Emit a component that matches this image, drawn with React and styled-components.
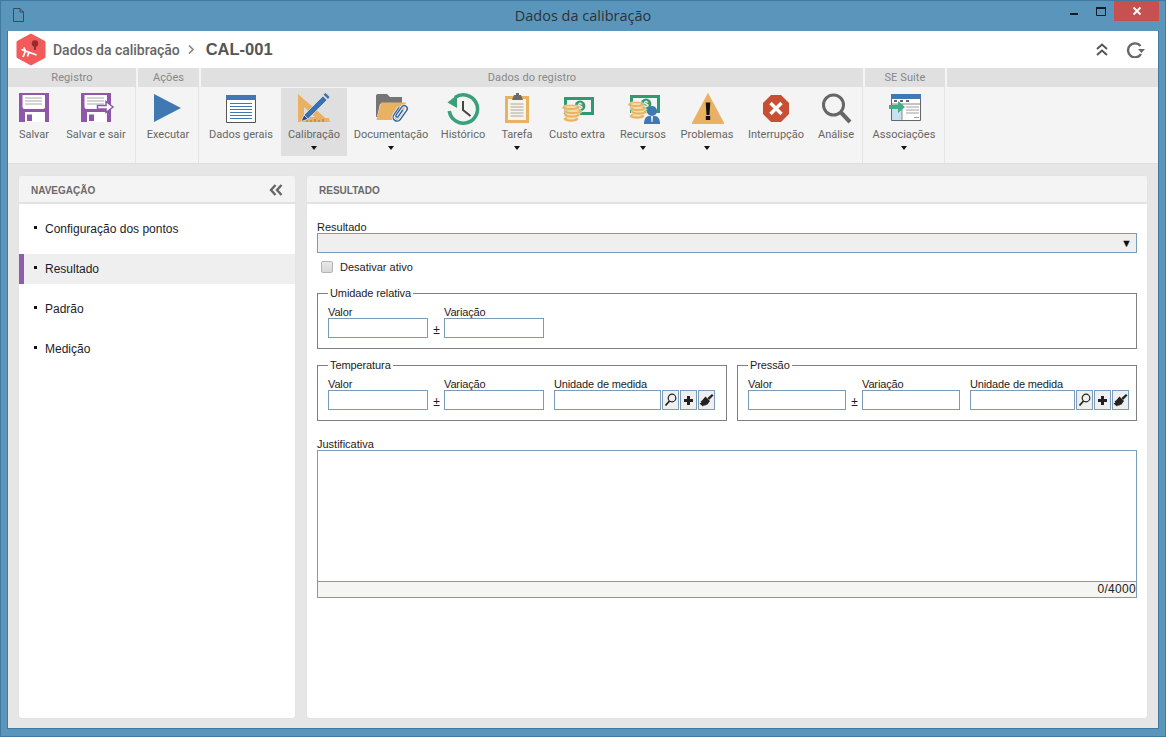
import React from "react";
import styled, { createGlobalStyle } from "styled-components";

const Global = createGlobalStyle`
  html, body { margin: 0; padding: 0; width: 1166px; height: 737px; overflow: hidden; background: #5a96bb; }
  * { box-sizing: border-box; }
  body { font-family: "Liberation Sans", Arial, sans-serif; font-size: 12px; color: #1c1c1c; }
`;

const Win = styled.div`
  width: 1166px; height: 737px; background: #5a96bb; border: 1px solid #41799f;
  display: flex; flex-direction: column; padding: 0 6px 7px;
`;
const TitleBar = styled.div`
  height: 30px; flex: none; margin: 0 -6px; display: grid; grid-template-columns: 1fr auto 1fr;
`;
const DocSlot = styled.div`padding: 7px 0 0 12px; line-height: 0;`;
const TitleText = styled.div`
  font-family: "Open Sans", "Noto Sans", sans-serif; font-size: 14.5px; line-height: 29px; color: #2a3338;
`;
const WinControls = styled.div`display: flex; justify-content: flex-end; align-items: flex-start;`;
const WinBtn = styled.div`
  width: ${p => p.$w}px; height: 20px; flex: none; display: flex; align-items: center; justify-content: center;
  background: ${p => p.$close ? "#c75050" : "transparent"}; line-height: 0;
`;
const Content = styled.div`
  flex: 1; min-height: 0; display: flex; flex-direction: column; border: 1px solid #41799f; border-top: 0; background: #e6e6e6;
`;
const Head = styled.div`
  height: 37px; background: #fff; display: flex; align-items: center; padding: 0 13px 0 8px; flex: none;
`;
const LogoSlot = styled.div`line-height: 0; margin-right: 7px;`;
const Crumb = styled.span`font-family: Roboto, sans-serif; font-weight: 500; font-size: 14px; color: #666; letter-spacing: -.02px;`;
const CrumbSep = styled.span`margin: 0 12px 0 8px; line-height: 0;`;
const Code = styled.span`font-family: "Liberation Sans", sans-serif; font-weight: 700; font-size: 16.5px; color: #555;`;
const HeadActions = styled.div`margin-left: auto; display: flex; align-items: center; gap: 18px; line-height: 0;`;

const Ribbon = styled.div`
  display: flex; gap: 2px; height: 96px; flex: none; background: #f4f4f4; border-bottom: 1px solid #dedede;
`;
const Group = styled.div`
  width: ${p => p.$w ? p.$w + "px" : "auto"}; flex: ${p => p.$w ? "none" : "1"};
  display: flex; flex-direction: column;
`;
const GroupLabel = styled.div`
  height: 19px; flex: none; background: #e0e0e0; text-align: center; line-height: 19px; color: #888;
  font-family: Roboto, sans-serif; font-size: 11px; letter-spacing: .1px;
`;
const GroupBody = styled.div`
  flex: 1; display: flex; padding-top: 1px; border-right: ${p => p.$last ? "0" : "1px solid #e4e4e4"};
`;
const RBtn = styled.div`
  width: ${p => p.$w}px; height: 68px; flex: none; display: flex; flex-direction: column; align-items: center;
  background: ${p => p.$active ? "#dfdfdf" : "transparent"}; padding-top: 4px;
`;
const IconSlot = styled.div`height: 33px; line-height: 0;`;
const RLabel = styled.div`
  margin-top: 3px; font-family: Roboto, sans-serif; font-size: 11px; line-height: 14px; color: #666; white-space: nowrap;
`;
const Caret = styled.div`
  margin-top: 4px; width: 0; height: 0; border-left: 3px solid transparent; border-right: 3px solid transparent; border-top: 4px solid #111;
`;

const Main = styled.div`
  flex: 1; min-height: 0; display: flex; gap: 12px; padding: 12px 11px 10px;
`;
const Panel = styled.div`
  width: ${p => p.$w}px; flex: none; background: #fff; border-radius: 3px; display: flex; flex-direction: column; box-shadow: 0 0 1px #d4d4d4;
`;
const PanelHead = styled.div`
  height: 28px; flex: none; background: #f4f4f4; border-bottom: 2px solid #e2e2e2; border-radius: 3px 3px 0 0;
  display: flex; align-items: center; justify-content: space-between; padding: 2px 12px 0;
  font-size: 10px; font-weight: 700; color: #6a6a6a;
`;
const NavList = styled.div`padding-top: 10px; display: flex; flex-direction: column; gap: 10px;`;
const NavItem = styled.div`
  height: 30px; display: flex; align-items: center; padding-left: 10px; font-size: 12px; color: #1c1c2c;
  background: ${p => p.$active ? "#efefef" : "transparent"};
  border-left: 5px solid ${p => p.$active ? "#8e5ca8" : "transparent"};
  &::before { content: ""; width: 3px; height: 3px; background: #111; margin: -3px 8px 0 0; }
`;
const Form = styled.div`padding: 17px 10px 0; display: flex; flex-direction: column;`;
const Label = styled.div`font-size: 11px; line-height: 12px; color: #1c1c1c; white-space: nowrap;`;
const FieldLabel = styled(Label)`letter-spacing: -.14px;`;
const SelectBox = styled.div`
  height: 20px; background: #efefef; border: 1px solid #7b9cb9; display: flex; align-items: center; justify-content: flex-end;
  padding-right: 4px; font-size: 11px; color: #111;
`;
const CheckRow = styled.div`display: flex; align-items: center; height: 14px; margin: 7px 0 12px 4px; gap: 7px;`;
const Check = styled.div`
  width: 12px; height: 12px; border-radius: 2px; border: 1px solid #b4b4b4; background: linear-gradient(#e8e8e8, #d8d8d8);
`;
const Fs = styled.fieldset`
  margin: 0; min-width: 0; border: 1px solid #808080; padding: 6px 0 10px 10px;
`;
const Lg = styled.legend`
  margin-left: 0; padding: 0 2px; font-size: 11px; line-height: 14px; color: #1c1c1c; letter-spacing: -.1px;
`;
const Rows = styled.div`display: flex; align-items: flex-end;`;
const Field = styled.div`display: flex; flex: none; flex-direction: column;`;
const Input = styled.div`
  width: ${p => p.$w}px; height: 20px; background: #fff; border: 1px solid #7b9cb9;
`;
const Pm = styled.div`
  width: ${p => p.$w}px; flex: none; height: 20px; line-height: 24px; text-align: center; font-size: 12px; padding-left: 1px;
`;
const Spacer = styled.div`width: ${p => p.$w}px; flex: none;`;
const IconBtn = styled.div`
  width: 17px; height: 20px; flex: none; margin-left: ${p => p.$ml}px; background: #efefef; border: 1px solid #7b9cb9;
  display: flex; align-items: center; justify-content: center; line-height: 0;
`;
const FsGrid = styled.div`display: grid; grid-template-columns: 410px 400px; gap: 10px; margin-top: 9px;`;
const TextAreaBox = styled.div`height: 148px; border: 1px solid #7b9cb9; display: flex; flex-direction: column;`;
const TextAreaBody = styled.div`flex: 1;`;
const TextAreaFoot = styled.div`
  height: 16px; background: #f5f5f3; border-top: 1px solid #7b9cb9; text-align: right; line-height: 14px; font-size: 12px; color: #1c1c1c; letter-spacing: .3px;
`;
const JustLabel = styled(Label)`margin-top: 17px;`;

const I = ({ w = 34, h = 33, children }) => <svg width={w} height={h} viewBox={`0 0 ${w} ${h}`} style={{ overflow: "visible" }}>{children}</svg>;

const SaveBase = () => <>
  <path d="M2 1h30v29H2z" fill="#8e57a8" />
  <path d="M5.500 3H28v12c0 1-1 2-2 2H7.500c-1 0-2-1-2-2z" fill="#fff" />
  <path d="M8 6h17M8 9h17M8 12h17" stroke="#aaa" strokeWidth="1" />
  <path d="M8 20h20v10H8z" fill="#fff" />
  <path d="M10 22.500h5V29h-5z" fill="#8e57a8" />
</>;
const Save = () => <I><SaveBase /></I>;
const SaveExit = () => <I>
  <SaveBase />
  <path d="M18.500 13.500H27V9.500l7 5.500-7 5.500v-3.500h-8.500z" fill="#fff" stroke="#8e57a8" strokeWidth="1.500" />
</I>;
const Play = () => <I><path d="M3 2l27 14L3 30z" fill="#3f78b3" /></I>;
const General = () => <I>
  <path d="M2.500 3.500h29v27h-29z" fill="#fff" stroke="#555" />
  <path d="M2 3h30v5H2z" fill="#3f78b3" />
  <path d="M6 11.500h22M6 14.500h22M6 17.500h22M6 20.500h22M6 23.500h22M6 26.500h22" stroke="#3f78b3" strokeWidth="1" />
</I>;
const Calib = () => <I>
  <path d="M1 2l32 28H1zM7 15v10h11z" fill="#e9b263" fillRule="evenodd" />
  <path d="M1 26h31l1 4H1z" fill="#e9b263" />
  <path d="M10 30v-3M14 30v-2M18 30v-3M22 30v-2M26 30v-3" stroke="#9a7434" strokeWidth="1" />
  <path d="M7 23L26 4l4 4-19 19z" fill="#3a72b0" stroke="#f4f4f4" strokeWidth=".6" />
  <path d="M26.500 2.500l2-1.500 4 4-1.500 2z" fill="#3a72b0" />
  <path d="M7 23l4 4-7 2.500z" fill="#1f4c80" stroke="#fff" strokeWidth=".6" />
</I>;
const Docs = () => <I>
  <path d="M2 4c0-1 .5-2 2-2h9l3 3h12v7H6l-3 13H2z" fill="#757575" />
  <path d="M7 10.500h25l-4 16c-.3 1-1 1.500-2 1.500H2.500z" fill="#e9b263" />
  <g transform="rotate(35 26 21)" fill="none" stroke="#2f66a8" strokeWidth="1.400">
    <path d="M22 17v9a4 4 0 0 0 8 0V15a3 3 0 0 0-6 0v10a1 1 0 0 0 2.500 0V17" stroke="#f4f4f4" strokeWidth="3" />
    <path d="M22 17v9a4 4 0 0 0 8 0V15a3 3 0 0 0-6 0v10a1 1 0 0 0 2.500 0V17" />
  </g>
</I>;
const History = () => <I>
  <path d="M9 5.500A14.200 14.200 0 1 1 3.300 19" fill="none" stroke="#3aa07c" strokeWidth="3.600" />
  <path d="M1.500 10.500L11 3v13z" fill="#3aa07c" />
  <path d="M17 9v9l7.500 6" fill="none" stroke="#444" strokeWidth="2" />
</I>;
const Clip = () => <I>
  <path d="M5 4h24v27H5z" fill="#e9b263" />
  <path d="M8 7h18v21H8z" fill="#f8f3e8" />
  <path d="M14 3h2V1h3v2h2l2 5H12z" fill="#6b6b6b" />
  <path d="M10.500 12h13M10.500 15h13M10.500 18h13M10.500 21h13M10.500 24h13" stroke="#a8a8a8" strokeWidth="1" />
</I>;
const Coin = ({ cx, cy, rx }) => <>
  <ellipse cx={cx} cy={cy} rx={rx} ry="3" fill="#e9b263" stroke="#f8ecd2" strokeWidth=".6" />
  <ellipse cx={cx} cy={cy - .5} rx={rx - 3} ry="1" fill="#f6dcae" />
</>;
const Note = ({ y }) => <>
  <path d={`M4 ${y}h30v18H4z`} fill="#2e9a72" />
  <path d={`M7 ${y + 3}h24v12H7z`} fill="#f4f4f4" />
  <circle cx="20" cy={y + 9} r="5.400" fill="#2e9a72" />
  <text x="20" y={y + 12.400} fontSize="9" fontWeight="700" fill="#f4f4f4" textAnchor="middle" fontFamily="Liberation Sans">$</text>
</>;
const Money = () => <I>
  <Note y={5} />
  <Coin cx={11} cy={27} rx={7.500} />
  <Coin cx={12} cy={23} rx={8} />
  <Coin cx={13} cy={19.500} rx={9} />
  <Coin cx={11} cy={15.500} rx={9} />
</I>;
const Resources = () => <I>
  <Note y={3} />
  <Coin cx={11} cy={24} rx={7.500} />
  <Coin cx={13} cy={20} rx={8} />
  <Coin cx={12} cy={16.500} rx={8} />
  <Coin cx={10} cy={12.500} rx={8} />
  <circle cx="26" cy="19" r="5" fill="#3f78b3" />
  <path d="M18 32c0-5 2-8 5-8h6c3 0 5 3 5 8z" fill="#3f78b3" />
  <path d="M25 24h2l-.5 6h-1z" fill="#f4f4f4" />
</I>;
const Warn = () => <I>
  <path d="M18 .7l16 30c.3.6 0 1.300-1 1.300H3c-1 0-1.300-.7-1-1.300z" fill="#e9b263" />
  <path d="M15.700 10.500h4.600L19.500 23h-3z" fill="#111" />
  <path d="M15.800 24h4.400v4h-4.400z" fill="#111" />
</I>;
const Stop = () => <I>
  <path d="M9 3h10l8 8v11l-8 8H9l-8-8V11z" transform="translate(3 0)" fill="#c94f34" />
  <path d="M11.500 11l11 11M22.500 11l-11 11" stroke="#fff" strokeWidth="3.400" />
</I>;
const Search = () => <I>
  <circle cx="14.500" cy="13" r="10" fill="none" stroke="#666" strokeWidth="3" />
  <path d="M22 20.500l9 9.500" stroke="#666" strokeWidth="4" />
</I>;
const Assoc = () => <I>
  <path d="M4.500 2.500h29v26h-29z" fill="#fff" stroke="#666" />
  <path d="M4 2h30v5H4z" fill="#3f78b3" />
  <path d="M5 12h10v16H5z" fill="#c4e2f4" />
  <path d="M5 12h28M15 12v16" stroke="#888" strokeWidth="1" />
  <path d="M7 9h3M13 9h3M19 9h3" stroke="#666" strokeWidth="2" />
  <path d="M19 15h13M19 18h13M19 21h13M27 25.500h5" stroke="#a0a0a0" strokeWidth="1" />
  <path d="M2 13h9V9l7 6-7 6v-4H2z" fill="#3fae82" />
</I>;

const Logo = () => <svg width="30" height="34" viewBox="0 0 30 34">
  <path d="M15 .5l13 7c1 .5 1.500 1 1.500 2v14c0 1-.5 1.500-1.500 2l-13 7-13-7c-1-.5-1.500-1-1.500-2v-14c0-1 .5-1.500 1.500-2z" fill="#f25b5a" />
  <path d="M5.500 16.500l15 5.500M9.500 18l-2.500 6M13 19l-1.500 4.500M8 14.500l1 3" stroke="#fff" strokeWidth="1.800" fill="none" />
  <circle cx="19" cy="10.500" r="3.200" fill="#962b2b" />
  <path d="M18 13h2v4h-2z" fill="#962b2b" />
</svg>;

const MagS = () => <svg width="13" height="14" viewBox="0 0 13 14">
  <circle cx="8" cy="5" r="3.800" fill="none" stroke="#222" strokeWidth="1.200" />
  <path d="M5.500 8l-4 4.500" stroke="#222" strokeWidth="1.800" />
</svg>;
const PlusS = () => <svg width="11" height="11" viewBox="0 0 11 11"><path d="M4 1h3v3h3v3H7v3H4V7H1V4h3z" fill="#222" /></svg>;
const Brush = () => <svg width="15" height="14" viewBox="0 0 15 14">
  <path d="M8.500 5l4.500-4 1.500 1.500L10 7z" fill="#222" />
  <path d="M6.500 3.500L11 8 8 12l-1-.5-1 1.500-1-1-1 1.500L.5 10.500l2-1-1-1 1.500-1z" fill="#222" />
</svg>;

const LookupBtns = ({ ml, gap }) => <>
  <IconBtn $ml={ml}><MagS /></IconBtn>
  <IconBtn $ml={gap}><PlusS /></IconBtn>
  <IconBtn $ml={gap}><Brush /></IconBtn>
</>;

const RB = ({ w, label, icon, caret, active }) => (
  <RBtn $w={w} $active={active}>
    <IconSlot>{icon}</IconSlot>
    <RLabel>{label}</RLabel>
    {caret && <Caret />}
  </RBtn>
);

const F = ({ label, w }) => <Field><FieldLabel>{label}</FieldLabel><Input $w={w} /></Field>;

export default function App() {
  return (
    <>
      <Global />
      <Win>
        <TitleBar>
          <DocSlot>
            <svg width="11" height="14" viewBox="0 0 11 14"><path d="M.5.500h6.500l3.500 3.500v9.500H.5zM7 .5V4h3.500" fill="none" stroke="#3d4a52" /></svg>
          </DocSlot>
          <TitleText>Dados da calibração</TitleText>
          <WinControls>
            <WinBtn $w={40}><svg width="8" height="3" style={{ marginTop: 6 }}><path d="M0 0h8v2H0z" fill="#111d26" /></svg></WinBtn>
            <WinBtn $w={14}><svg width="10" height="9" style={{ marginTop: 1 }}><path d="M.5 1.500h9v7h-9z" fill="none" stroke="#111d26" /><path d="M0 0h10v2H0z" fill="#111d26" /></svg></WinBtn>
            <Spacer $w={6} />
            <WinBtn $w={45} $close><svg width="10" height="10" viewBox="0 0 10 10"><path d="M1.500 1.500l7 7M8.500 1.500l-7 7" stroke="#fff" strokeWidth="1.800" /></svg></WinBtn>
            <Spacer $w={6} />
          </WinControls>
        </TitleBar>
        <Content>
          <Head>
            <LogoSlot><Logo /></LogoSlot>
            <Crumb>Dados da calibração</Crumb>
            <CrumbSep><svg width="6" height="9" viewBox="0 0 6 9"><path d="M1 .5l4 4-4 4" fill="none" stroke="#888" strokeWidth="1.600" /></svg></CrumbSep>
            <Code>CAL-001</Code>
            <HeadActions>
              <svg width="12" height="13" viewBox="0 0 12 13"><path d="M1 6l5-4.500L11 6M1 12l5-4.500L11 12" fill="none" stroke="#555" strokeWidth="2" /></svg>
              <svg width="19" height="16" viewBox="0 0 19 16"><path d="M15 12A7 7 0 1 1 14.500 4" fill="none" stroke="#666" strokeWidth="2.400" /><path d="M12 7h7l-3.500 4z" fill="#666" /></svg>
            </HeadActions>
          </Head>
          <Ribbon>
            <Group $w={128}>
              <GroupLabel>Registro</GroupLabel>
              <GroupBody>
                <RB w={52} label="Salvar" icon={<Save />} />
                <RB w={72} label="Salvar e sair" icon={<SaveExit />} />
              </GroupBody>
            </Group>
            <Group $w={61}>
              <GroupLabel>Ações</GroupLabel>
              <GroupBody><RB w={60} label="Executar" icon={<Play />} /></GroupBody>
            </Group>
            <Group $w={662}>
              <GroupLabel>Dados do registro</GroupLabel>
              <GroupBody>
                <RB w={80} label="Dados gerais" icon={<General />} />
                <RB w={66} label="Calibração" icon={<Calib />} caret active />
                <RB w={88} label="Documentação" icon={<Docs />} caret />
                <RB w={56} label="Histórico" icon={<History />} />
                <RB w={52} label="Tarefa" icon={<Clip />} caret />
                <RB w={68} label="Custo extra" icon={<Money />} />
                <RB w={64} label="Recursos" icon={<Resources />} caret />
                <RB w={64} label="Problemas" icon={<Warn />} caret />
                <RB w={74} label="Interrupção" icon={<Stop />} />
                <RB w={46} label="Análise" icon={<Search />} />
              </GroupBody>
            </Group>
            <Group $w={80}>
              <GroupLabel>SE Suite</GroupLabel>
              <GroupBody><RB w={78} label="Associações" icon={<Assoc />} caret /></GroupBody>
            </Group>
            <Group>
              <GroupLabel />
              <GroupBody $last />
            </Group>
          </Ribbon>
          <Main>
            <Panel $w={276}>
              <PanelHead>
                NAVEGAÇÃO
                <svg width="14" height="12" viewBox="0 0 14 12"><path d="M6.500 1L2 6l4.500 5M12.500 1L8 6l4.500 5" fill="none" stroke="#666" strokeWidth="2.400" /></svg>
              </PanelHead>
              <NavList>
                <NavItem>Configuração dos pontos</NavItem>
                <NavItem $active>Resultado</NavItem>
                <NavItem>Padrão</NavItem>
                <NavItem>Medição</NavItem>
              </NavList>
            </Panel>
            <Panel $w={840}>
              <PanelHead>RESULTADO</PanelHead>
              <Form>
                <Label>Resultado</Label>
                <SelectBox>▼</SelectBox>
                <CheckRow><Check /><Label>Desativar ativo</Label></CheckRow>
                <Fs>
                  <Lg>Umidade relativa</Lg>
                  <Rows>
                    <F label="Valor" w={100} />
                    <Pm $w={16}>±</Pm>
                    <F label="Variação" w={100} />
                  </Rows>
                </Fs>
                <FsGrid>
                  <Fs>
                    <Lg>Temperatura</Lg>
                    <Rows>
                      <F label="Valor" w={100} />
                      <Pm $w={16}>±</Pm>
                      <F label="Variação" w={100} />
                      <Spacer $w={10} />
                      <F label="Unidade de medida" w={107} />
                      <LookupBtns ml={1} gap={1} />
                    </Rows>
                  </Fs>
                  <Fs>
                    <Lg>Pressão</Lg>
                    <Rows>
                      <F label="Valor" w={98} />
                      <Pm $w={16}>±</Pm>
                      <F label="Variação" w={98} />
                      <Spacer $w={10} />
                      <F label="Unidade de medida" w={105} />
                      <LookupBtns ml={1} gap={1} />
                    </Rows>
                  </Fs>
                </FsGrid>
                <JustLabel>Justificativa</JustLabel>
                <TextAreaBox>
                  <TextAreaBody />
                  <TextAreaFoot>0/4000</TextAreaFoot>
                </TextAreaBox>
              </Form>
            </Panel>
          </Main>
        </Content>
      </Win>
    </>
  );
}
